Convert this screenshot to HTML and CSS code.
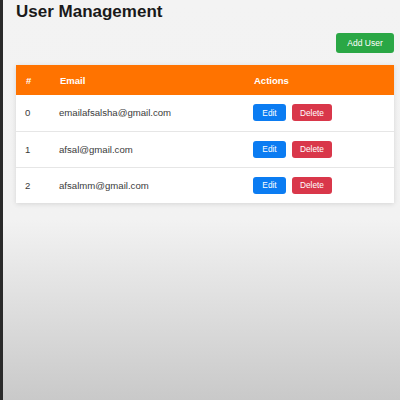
FILE: index.html
```html
<!DOCTYPE html>
<html>
<head>
<meta charset="utf-8">
<link rel="stylesheet" href="styles.css">
</head>
<body>
<div class="page">
  <h1 class="title">User Management</h1>
  <div class="toolbar"><button class="btn btn-add">Add User</button></div>
  <table class="users">
    <thead>
      <tr><th class="c-id">#</th><th class="c-email">Email</th><th>Actions</th></tr>
    </thead>
    <tbody>
      <tr><td>0</td><td>emailafsalsha@gmail.com</td><td><div class="actions"><button class="btn btn-edit">Edit</button><button class="btn btn-del">Delete</button></div></td></tr>
      <tr><td>1</td><td>afsal@gmail.com</td><td><div class="actions"><button class="btn btn-edit">Edit</button><button class="btn btn-del">Delete</button></div></td></tr>
      <tr><td>2</td><td>afsalmm@gmail.com</td><td><div class="actions"><button class="btn btn-edit">Edit</button><button class="btn btn-del">Delete</button></div></td></tr>
    </tbody>
  </table>
</div>
</body>
</html>
```
FILE: styles.css
```css
html, body {
  margin: 0;
  height: 100%;
}
body {
  font-family: "Liberation Sans", Arial, sans-serif;
  background: linear-gradient(to bottom, #f3f3f3 0%, #f2f2f2 55%, #c9c9c9 100%);
  border-left: 3px solid #2a2a2a;
  box-sizing: border-box;
  overflow: hidden;
}
.page {
  padding: 0 6px 0 13px;
}
.title {
  margin: 0;
  padding-top: 2px;
  font-size: 17px;
  font-weight: bold;
  color: #1a1a1a;
  line-height: 20px;
}
.toolbar {
  display: flex;
  justify-content: flex-end;
  margin-top: 11px;
}
.btn {
  font-family: "Liberation Sans", Arial, sans-serif;
  border: none;
  color: #fff;
  border-radius: 3px;
  padding: 0;
  cursor: pointer;
}
.btn-add {
  background: #2aa745;
  width: 58px;
  height: 20px;
  font-size: 8.5px;
}
.users {
  margin-top: 12px;
  width: 100%;
  border-collapse: collapse;
  background: #fff;
  box-shadow: 0 1px 5px rgba(0,0,0,0.12);
  font-size: 9.6px;
  color: #3a3a3a;
}
.users th {
  background: #ff7300;
  color: #fff;
  font-weight: bold;
  text-align: left;
  height: 30px;
  padding: 0 10px;
  font-size: 9.5px;
  box-sizing: border-box;
}
.users .c-id { width: 34px; }
.users .c-email { width: 194px; }
.users td {
  height: 36px;
  padding: 0 9px;
  border-bottom: 1px solid #e6e6e6;
  box-sizing: border-box;
}
.users tbody tr:last-child td { border-bottom: none; }
.actions {
  display: flex;
  gap: 6px;
}
.btn-edit {
  background: #0b7cf2;
  width: 33px;
  height: 17px;
  font-size: 8.3px;
}
.btn-del {
  background: #d9374a;
  width: 40px;
  height: 17px;
  font-size: 8.3px;
}
```
